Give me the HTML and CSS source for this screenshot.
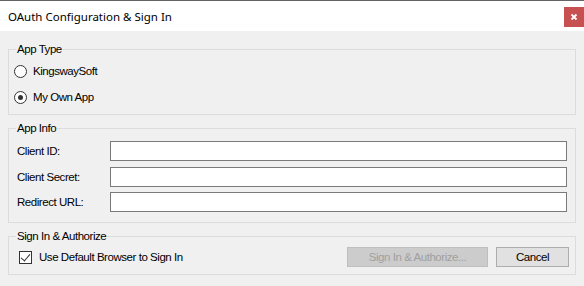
FILE: index.html
```html
<!DOCTYPE html>
<html>

<head>
  <title>OAuth Configuration &amp; Sign In</title>
  <link rel="stylesheet" href="styles.css">
</head>

<body>
  <div class="window">
    <div class="titlebar">
      <span class="title">OAuth Configuration &amp; Sign In</span>
      <button class="close" title="Close">
        <svg width="8" height="8" viewBox="0 0 8 8">
          <path d="M1.5 1.5 L6.5 6.5 M6.5 1.5 L1.5 6.5" stroke="#ffffff" stroke-width="1.8" />
        </svg>
      </button>
    </div>

    <div class="content">
      <fieldset class="group type-group">
        <legend>App Type</legend>
        <div class="group-body">
          <label class="radio-row"><input type="radio" name="apptype"> KingswaySoft</label>
          <label class="radio-row"><input type="radio" name="apptype" checked> My Own App</label>
        </div>
      </fieldset>

      <fieldset class="group info-group">
        <legend>App Info</legend>
        <div class="group-body">
          <div class="field first">
            <label for="clientId">Client ID:</label>
            <input type="text" id="clientId">
          </div>
          <div class="field second">
            <label for="clientSecret">Client Secret:</label>
            <input type="text" id="clientSecret">
          </div>
          <div class="field third">
            <label for="redirectUrl">Redirect URL:</label>
            <input type="text" id="redirectUrl">
          </div>
        </div>
      </fieldset>

      <fieldset class="group sign-group">
        <legend>Sign In &amp; Authorize</legend>
        <div class="group-body sign-row">
          <label class="check-row"><input type="checkbox" checked> Use Default Browser to Sign In</label>
          <div class="buttons">
            <button class="btn signin" disabled>Sign In &amp; Authorize...</button>
            <button class="btn cancel">Cancel</button>
          </div>
        </div>
      </fieldset>
    </div>
  </div>
</body>

</html>
```

FILE: styles.css
```css
html,
body {
  margin: 0;
  padding: 0;
  background-color: #f0f0f0;
  font-family: "Liberation Sans", Arial, sans-serif;
  font-size: 11.5px;
  letter-spacing: -0.45px;
  color: #000000;
}

.window {
  width: 584px;
  height: 286px;
  display: flex;
  flex-direction: column;
  background-color: #f0f0f0;
}

.titlebar {
  height: 30px;
  border-top: 1px solid #646464;
  background-color: #ffffff;
  display: flex;
  align-items: center;
  justify-content: space-between;
  padding-left: 8px;
}

.title {
  font-family: "Noto Sans", sans-serif;
  font-size: 11.5px;
  letter-spacing: 0;
  margin-top: 1px;
}

.close {
  width: 20px;
  height: 20px;
  margin-top: 2px;
  border: none;
  padding: 0;
  background-color: #c75050;
  display: flex;
  align-items: center;
  justify-content: center;
}

.content {
  padding: 0 8px;
  display: flex;
  flex-direction: column;
}

.group {
  margin: 6px 0 0 0;
  padding: 0;
  border: 1px solid #dcdcdc;
  min-width: 0;
}

.group legend {
  margin-left: 7px;
  padding: 0 1px;
  line-height: 14px;
}

.type-group {
  margin-top: 11px;
}

.type-group .group-body {
  padding: 2px 0 4px 5px;
}

.radio-row {
  display: flex;
  align-items: center;
  height: 26px;
}

.radio-row input {
  -webkit-appearance: none;
  appearance: none;
  width: 13px;
  height: 13px;
  margin: 0 6px 0 0;
  border: 1px solid #333333;
  border-radius: 50%;
  background-color: #ffffff;
  display: flex;
  align-items: center;
  justify-content: center;
}

.radio-row input:checked::after {
  content: "";
  width: 5px;
  height: 5px;
  border-radius: 50%;
  background-color: #333333;
}

.info-group .group-body {
  padding: 0 8px 10px 8px;
}

.field {
  display: flex;
  align-items: center;
}

.field.first {
  margin-top: 6px;
}

.field.second {
  margin-top: 6px;
}

.field.third {
  margin-top: 5px;
}

.field label {
  width: 93px;
}

.field input {
  flex: 1;
  height: 20px;
  box-sizing: border-box;
  margin: 0;
  border: 1px solid #7a7a7a;
  background-color: #ffffff;
  outline: none;
}

.sign-group .group-body {
  padding: 4px 6px 7px 10px;
}

.sign-row {
  display: flex;
  align-items: center;
  justify-content: space-between;
}

.check-row {
  display: flex;
  align-items: center;
}

.check-row input {
  -webkit-appearance: none;
  appearance: none;
  position: relative;
  width: 13px;
  height: 13px;
  margin: 0 7px 0 0;
  border: 1px solid #333333;
  background-color: #ffffff;
}

.check-row input:checked::after {
  content: "";
  position: absolute;
  left: 3px;
  top: 0px;
  width: 4px;
  height: 8px;
  border-right: 1px solid #333333;
  border-bottom: 1px solid #333333;
  transform: rotate(40deg);
}

.buttons {
  display: flex;
  gap: 8px;
}

.btn {
  height: 20px;
  box-sizing: border-box;
  margin: 0;
  padding: 0;
  font-family: "Liberation Sans", Arial, sans-serif;
  font-size: 11.5px;
  letter-spacing: -0.45px;
}

.signin {
  width: 141px;
  background-color: #cccccc;
  border: 1px solid #bfbfbf;
  color: #a0a0a0;
}

.cancel {
  width: 73px;
  background-color: #e1e1e1;
  border: 1px solid #adadad;
  color: #000000;
}
```
